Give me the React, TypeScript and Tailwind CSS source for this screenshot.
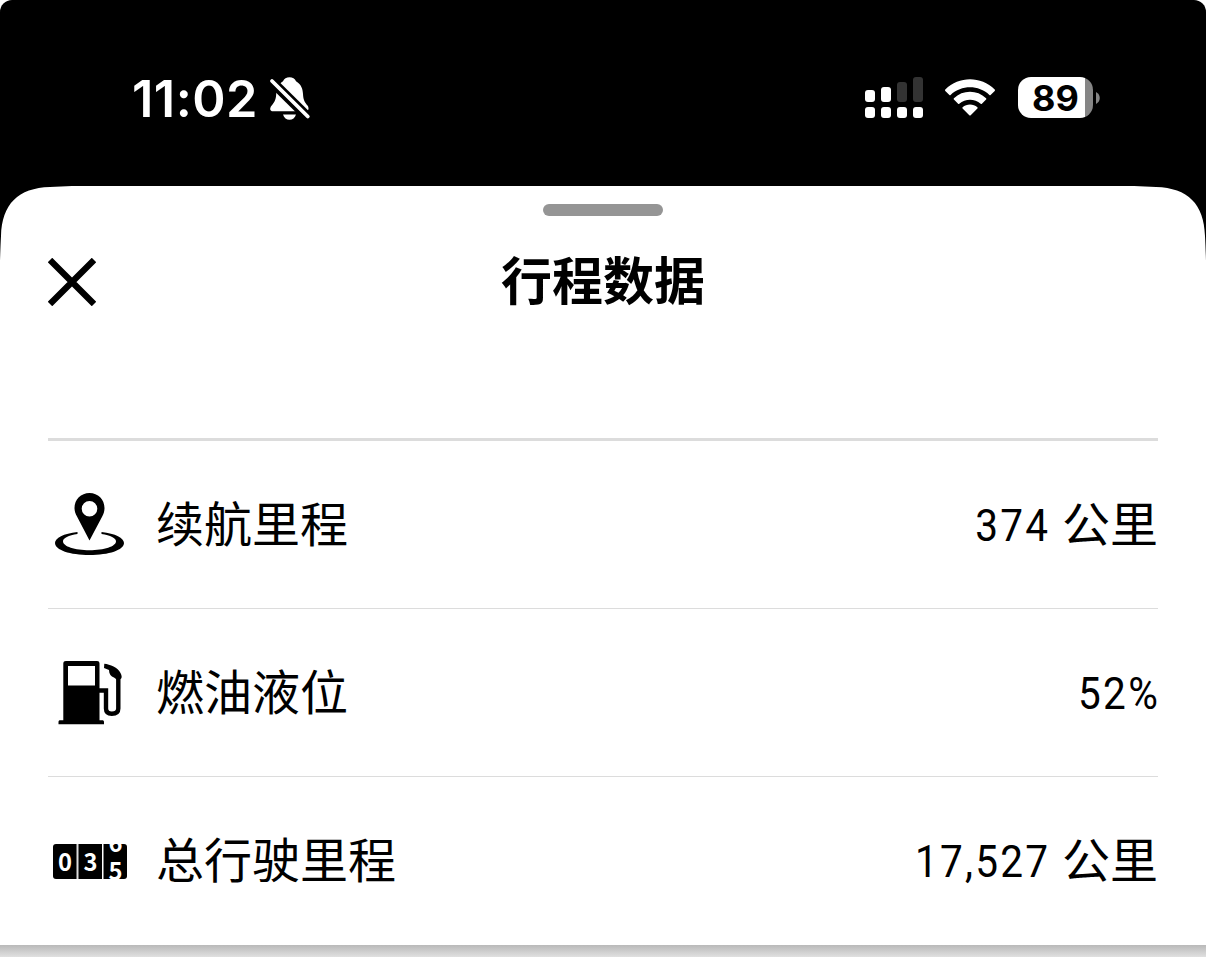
import type { ReactNode } from 'react'

const SignalIcon = () => (
  <svg width="58" height="42" viewBox="0 0 58 42" fill="#fff">
    <rect x="0" y="13" width="10" height="12" rx="3" />
    <rect x="16" y="10" width="10" height="15" rx="3" />
    <rect x="32" y="5" width="10" height="20" rx="3" fill="#333" />
    <rect x="48" y="0" width="10" height="25" rx="3" fill="#333" />
    <rect x="0" y="30" width="10" height="11" rx="3" />
    <rect x="16" y="30" width="10" height="11" rx="3" />
    <rect x="32" y="30" width="10" height="11" rx="3" />
    <rect x="48" y="30" width="10" height="11" rx="3" />
  </svg>
)

const WifiIcon = () => (
  <svg width="52" height="38" viewBox="0 0 52 38" fill="#fff">
    <path d="M1.300 10.500C15-3.100 37-3.100 50.700 10.500C51.100 10.900 51.100 11.500 50.700 11.900L46.600 16C46.200 16.400 45.800 16.400 45.400 16C34.500 5.800 17.500 5.800 6.600 16C6.200 16.400 5.800 16.400 5.400 16L1.300 11.900C.9 11.500.9 10.900 1.300 10.500Z" />
    <path d="M9.900 19.300C18.800 10.700 33.200 10.700 42.100 19.300C42.500 19.700 42.500 20.200 42.100 20.600L37.900 24.800C37.500 25.200 37.100 25.200 36.700 24.800C30.700 19.300 21.300 19.300 15.300 24.800C14.900 25.200 14.500 25.200 14.100 24.800L9.900 20.600C9.500 20.200 9.500 19.700 9.900 19.300Z" />
    <path d="M18.600 28.200C22.700 24.500 29.300 24.500 33.400 28.200C33.800 28.600 33.800 29.100 33.400 29.500L26.700 36.300C26.300 36.700 25.700 36.700 25.300 36.300L18.600 29.500C18.200 29.100 18.200 28.600 18.600 28.200Z" />
  </svg>
)

const BellOffIcon = () => (
  <svg width="42" height="44" viewBox="0 0 42 44" fill="none">
    <path
      d="M20.500.3C17.500.3 15 1.800 14 4.200C9 7 7.500 11.500 7.200 17C7 23 5 25.500 2.700 28.500C.2 31.500 1 34.300 4 34.300H36.500C39.500 34.300 40.500 31.500 38.500 28.500C36 25.500 34.200 23 34 17C33.700 11.500 32 7 27 4.200C26 1.800 23.500.3 20.500.3Z"
      fill="#fff"
    />
    <path d="M14 37.500H27C26 41 23.500 42.700 20.500 42.700S15 41 14 37.500Z" fill="#fff" />
    <path d="M-1 .8L41 42.200" stroke="#000" strokeWidth="10" />
    <path d="M3 4L38.800 39.500" stroke="#fff" strokeWidth="3.800" strokeLinecap="round" />
  </svg>
)

const RangeIcon = () => (
  <svg width="72" height="64" viewBox="0 0 72 64">
    <path
      fillRule="evenodd"
      d="M35.500 0C27 0 20.500 6.600 20.500 15C20.500 18 21.500 21 23 23.500L35.500 47.500L48.200 23.500C49.700 21 50.500 18 50.500 15C50.500 6.600 44 0 35.500 0ZM35.500 8A7.800 7.800 0 1 1 35.500 23.600A7.800 7.800 0 1 1 35.500 8Z"
    />
    <path
      fillRule="evenodd"
      d="M23.500 39C9.500 40.600 1 45 1 50C1 57 16 62 35.500 62S70 57 70 50C70 45 61.500 40.600 47.500 39V41C56.500 42.300 62 45 62 48.300C62 53.500 50 57.300 35.500 57.300S9 53.500 9 48.300C9 45 14.500 42.300 23.500 41Z"
    />
  </svg>
)

const FuelIcon = () => (
  <svg width="72" height="68" viewBox="0 0 72 68" className="ml-[8px]">
    <path
      fillRule="evenodd"
      d="M8 2H39C40.500 2 41.500 2.800 41.500 4.500V61.200H44.200C45.400 61.200 46 61.800 46 63V65.300H.5V63C.5 61.800 1 61.200 2.300 61.200H5.300V4.500C5.300 2.800 6.300 2 8 2ZM10 7V26.500H37V7Z"
    />
    <path
      d="M41 31.500H48V49.500C48 53 50 54.700 53.800 54.700C57.700 54.700 60.300 53 60.300 49.500V19"
      fill="none"
      stroke="#000"
      strokeWidth="4.400"
    />
    <path d="M46.300 4.800C52 5.300 60 8.500 62.500 14C63.800 16.500 64 18.500 63.200 19.500L60 21.500L56 18.500C53 17.500 51 15 51 11L46 9Z" />
  </svg>
)

const OdometerIcon = () => (
  <svg
    width="74"
    height="35"
    viewBox="0 0 74 35"
    className="font-['Noto_Sans_CJK_SC','Noto_Sans',sans-serif] text-[25px] font-bold"
  >
    <rect width="74" height="35" rx="3" />
    <rect x="23.500" width="2" height="35" fill="#ddd" />
    <rect x="49" width="1.500" height="35" fill="#fff" />
    <g fill="#fff">
      <text x="5" y="27" textLength="14" lengthAdjust="spacingAndGlyphs">0</text>
      <text x="30.500" y="27" textLength="14" lengthAdjust="spacingAndGlyphs">3</text>
      <text x="55.500" y="8" textLength="14" lengthAdjust="spacingAndGlyphs">6</text>
      <text x="55.500" y="36" textLength="14" lengthAdjust="spacingAndGlyphs">5</text>
    </g>
  </svg>
)

type TripRow = {
  label: string
  value: string
  unit?: string
  icon: ReactNode
}

const rows: TripRow[] = [
  { label: '续航里程', value: '374', unit: '公里', icon: <RangeIcon /> },
  { label: '燃油液位', value: '52%', icon: <FuelIcon /> },
  { label: '总行驶里程', value: '17,527', unit: '公里', icon: <OdometerIcon /> },
]

const StatusBar = () => (
  <header className="flex h-[186px] items-start justify-between pt-[77px] pr-[106px] pl-[132px] text-white">
    <div className="flex items-start">
      <span className="w-[137px] pt-px font-['Inter',sans-serif] text-[50.5px] leading-[42px] font-semibold tracking-[0.5px]">
        11:02
      </span>
      <BellOffIcon />
    </div>
    <div className="flex items-start">
      <SignalIcon />
      <div className="mt-[2px] ml-[21px]">
        <WifiIcon />
      </div>
      <div className="ml-[22px] flex items-center">
        <div className="flex h-[41px] w-[75px] items-center justify-center rounded-[13px] bg-linear-to-r from-white from-[89%] to-[#858585] to-[89%] font-['Inter',sans-serif] text-[36px] leading-none font-bold text-black">
          89
        </div>
        <svg className="ml-[3px]" width="4" height="12" viewBox="0 0 4 12">
          <path d="M0 0C5 2.500 5 9.500 0 12Z" fill="#858585" />
        </svg>
      </div>
    </div>
  </header>
)

const Row = ({ label, value, unit, icon }: TripRow) => (
  <li className="flex h-[168px] items-center border-b border-[#dcdcdc] last:border-b-0">
    <div className="flex w-[84px] justify-center">{icon}</div>
    <span className="ml-[24px] pb-[8px] text-[48px] leading-[64px]">{label}</span>
    <span className="ml-auto flex items-center text-[48px] leading-[64px]">
      <span className="-mr-[2px] origin-right scale-x-[0.9] pt-[2px] font-['Roboto',sans-serif] text-[45px] tracking-[2.5px]">
        {value}
      </span>
      {unit && <span className="ml-[14px] pb-[8px]">{unit}</span>}
    </span>
  </li>
)

export default function App() {
  return (
    <div className="h-[957px] w-[1206px] overflow-hidden bg-white font-['Noto_Sans_CJK_SC',sans-serif] text-black">
      <div className="rounded-t-[12px] bg-black">
        <StatusBar />
        <main className="flex h-[759px] flex-col bg-white px-[48px] [clip-path:path('M0_75C.3_65_.6_57_1_50C2_18_18_2_50_1C57_.6_65_.3_72_0H1134C1141_.3_1149_.6_1156_1C1188_2_1204_18_1205_50C1205.4_57_1205.7_65_1206_75V759H0Z')]">
          <div className="mt-[18px] h-[12px] w-[120px] shrink-0 self-center rounded-full bg-[#959595]" />
          <div className="mt-[32px] flex h-[68px] shrink-0 items-center">
            <button className="w-[48px]" aria-label="关闭">
              <svg width="48" height="48" viewBox="0 0 48 48">
                <path d="M2 2L46 46M46 2L2 46" stroke="#000" strokeWidth="6.300" />
              </svg>
            </button>
            <h1 className="mr-[48px] flex-1 pb-[8px] text-center text-[51px] leading-[68px] font-bold">行程数据</h1>
          </div>
          <ul className="mt-[122px] border-t-3 border-[#dcdcdc]">
            {rows.map((row) => (
              <Row key={row.label} {...row} />
            ))}
          </ul>
        </main>
      </div>
      <div className="h-[12px] bg-linear-to-b from-[#b9b9b9] to-[#e0e0e0]" />
    </div>
  )
}
